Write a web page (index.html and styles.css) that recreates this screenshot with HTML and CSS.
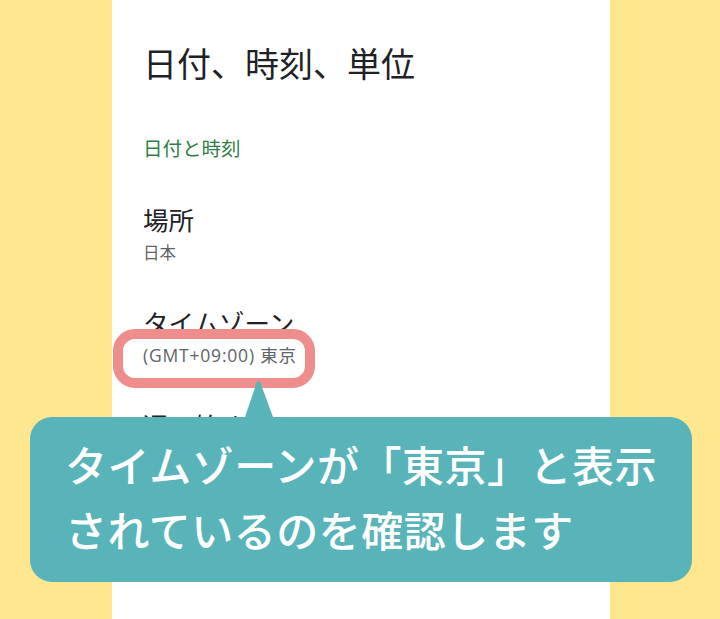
FILE: index.html
```html
<!DOCTYPE html>
<html lang="ja">
<head>
<meta charset="utf-8">
<link rel="stylesheet" href="styles.css">
</head>
<body>
<div class="stage">
  <main class="panel">
    <h1 class="title">日付、時刻、単位</h1>
    <h2 class="section">日付と時刻</h2>
    <div class="item">
      <div class="item-title">場所</div>
      <div class="item-sub">日本</div>
    </div>
    <div class="item">
      <div class="item-title">タイムゾーン</div>
      <div class="item-sub latin">(GMT+09:00) 東京</div>
    </div>
    <div class="item item-last">
      <div class="item-title">週の始め</div>
      <div class="item-sub">日曜日</div>
    </div>
  </main>
  <div class="highlight"></div>
  <div class="callout">
    <svg class="callout-tail" width="40" height="40" viewBox="0 0 40 40">
      <path d="M3 38 L14.5 4 Q16.5 -0.5 18.5 4 L31 38 Z" fill="#58b4b9"/>
    </svg>
    <p class="callout-text">タイムゾーンが「東京」と表示<br>されているのを確認します</p>
  </div>
</div>
</body>
</html>
```
FILE: styles.css
```css
html, body {
  margin: 0;
  padding: 0;
}
body {
  background: #fee78f;
  font-family: Roboto, "Noto Sans CJK JP", sans-serif;
  overflow: hidden;
}
.stage {
  position: relative;
  width: 720px;
  height: 619px;
  overflow: hidden;
}
.panel {
  width: 498px;
  height: 619px;
  margin-left: 112px;
  background: #ffffff;
  box-sizing: border-box;
  padding: 42.5px 0 0 31px;
}
.title {
  margin: 0;
  font-family: "Noto Sans CJK JP", sans-serif;
  font-size: 34px;
  line-height: 40px;
  font-weight: 400;
  color: #202124;
}
.section {
  margin: 53.5px 0 0;
  font-family: "Noto Sans CJK JP", sans-serif;
  font-size: 19.5px;
  line-height: 24px;
  font-weight: 400;
  color: #2f7f47;
}
.item {
  margin-top: 42.5px;
}
.item-last {
  margin-top: 43px;
}
.item-title {
  font-family: "Noto Sans CJK JP", sans-serif;
  font-size: 25.5px;
  line-height: 32px;
  color: #202124;
}
.item-sub {
  margin-top: 6.5px;
  font-family: "Noto Sans CJK JP", sans-serif;
  font-size: 16.5px;
  line-height: 22px;
  color: #5f6368;
}
.item-sub.latin {
  font-family: "Open Sans", "Noto Sans CJK JP", sans-serif;
  font-size: 17.5px;
  letter-spacing: 0.8px;
  margin-left: 0;
}
.highlight {
  position: absolute;
  left: 113px;
  top: 329px;
  width: 202px;
  height: 59px;
  box-sizing: border-box;
  border: 10px solid #ee8e8c;
  border-radius: 22px;
}
.callout {
  position: absolute;
  left: 30px;
  top: 417px;
  width: 662px;
  height: 165px;
  box-sizing: border-box;
  background: #58b4b9;
  border-radius: 22px;
  padding: 15px 20px 0 35px;
}
.callout-tail {
  position: absolute;
  left: 212px;
  top: -38px;
  display: block;
}
.callout-text {
  margin: 0;
  font-family: "Noto Sans CJK JP", sans-serif;
  font-size: 42px;
  line-height: 64.5px;
  font-weight: 500;
  letter-spacing: 0.5px;
  color: #ffffff;
  white-space: nowrap;
}
```
